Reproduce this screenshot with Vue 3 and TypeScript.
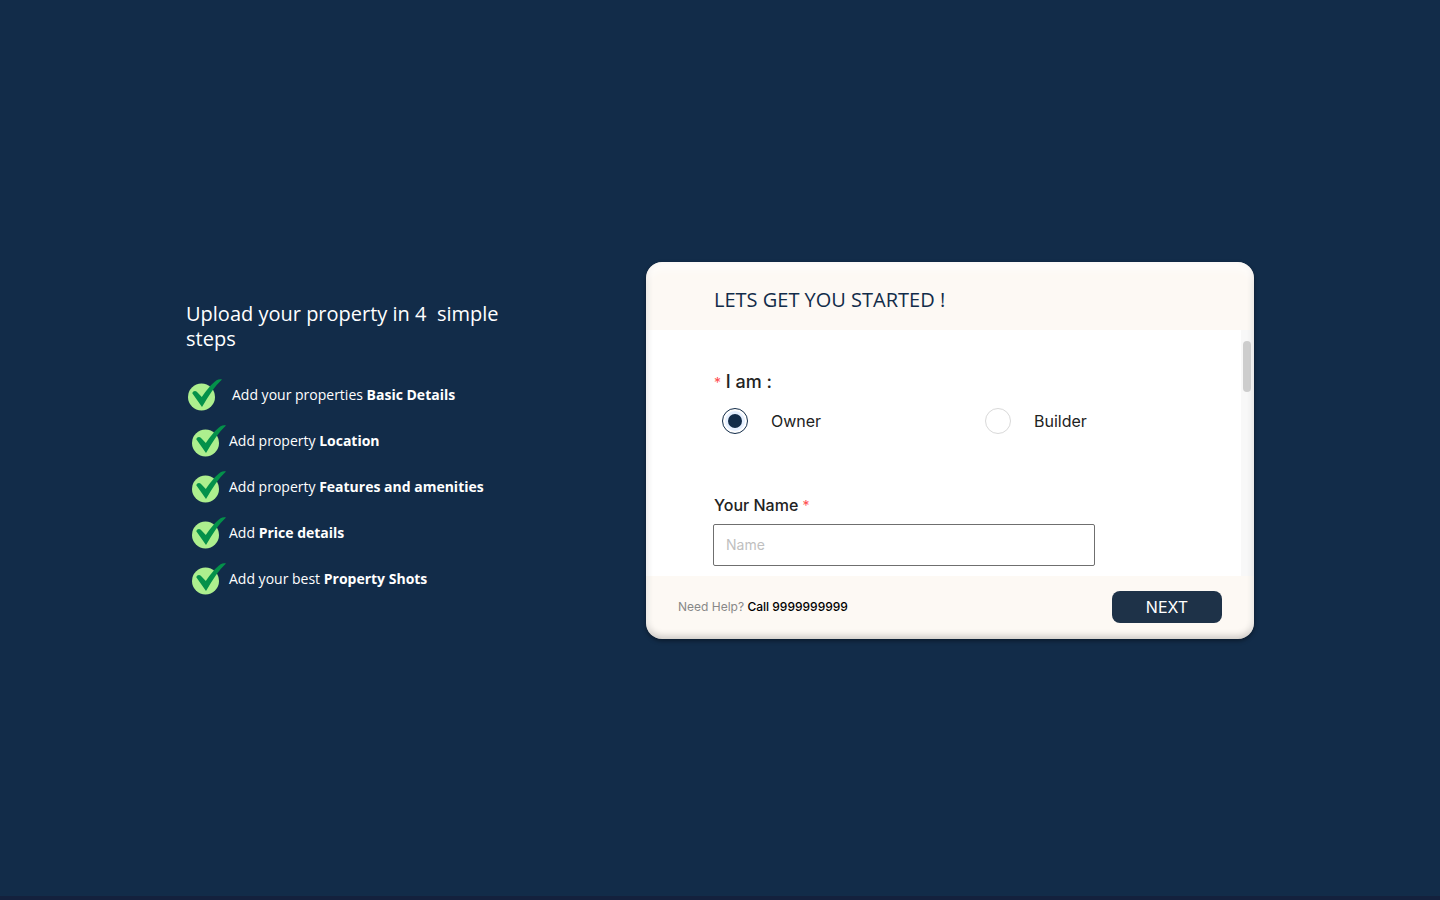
<script setup lang="ts">
import { ref } from 'vue'

interface Step {
  text: string
  strong: string
}

const steps: Step[] = [
  { text: 'Add your properties', strong: 'Basic Details' },
  { text: 'Add property', strong: 'Location' },
  { text: 'Add property', strong: 'Features and amenities' },
  { text: 'Add', strong: 'Price details' },
  { text: 'Add your best', strong: 'Property Shots' },
]

const roles: string[] = ['Owner', 'Builder']
const role = ref<string>('Owner')
const name = ref<string>('')
</script>

<template>
  <div class="page">
    <main class="layout">
      <section class="intro">
        <h1>Upload your property in 4&nbsp; simple steps</h1>
        <ul>
          <li v-for="step in steps" :key="step.strong">
            <svg class="tick" viewBox="0 0 34 32" aria-hidden="true">
              <circle cx="13.5" cy="18" r="13.5" fill="#adef8e" />
              <path
                d="M4.3 14.2C5 11.8 7.4 11.2 8.8 12.8L13.8 18C18.5 11.5 23.5 4.8 28.6 1.3C30.2 .2 32 0 34 .4C26.8 7 20.2 17.5 14 28Z"
                fill="#04914a"
              />
            </svg>
            <span>{{ step.text }} <strong>{{ step.strong }}</strong></span>
          </li>
        </ul>
      </section>

      <form class="card" @submit.prevent>
        <header>
          <h2>LETS GET YOU STARTED !</h2>
        </header>
        <div class="body">
          <div class="fields">
            <fieldset>
              <legend><span class="star">*</span> I am :</legend>
              <div class="roles">
                <label v-for="item in roles" :key="item">
                  <input v-model="role" type="radio" name="role" :value="item" />
                  {{ item }}
                </label>
              </div>
            </fieldset>
            <label class="name-label" for="name">Your Name <span class="star">*</span></label>
            <input id="name" v-model="name" class="name" type="text" placeholder="Name" />
          </div>
          <div class="track"><div class="thumb"></div></div>
        </div>
        <footer>
          <p>Need Help? <b>Call 9999999999</b></p>
          <button type="submit">NEXT</button>
        </footer>
      </form>
    </main>
  </div>
</template>

<style>
body {
  margin: 0;
  background: #122c49;
}
</style>

<style scoped>
* {
  box-sizing: border-box;
}

.page {
  min-height: 100vh;
  display: flex;
  align-items: center;
  justify-content: center;
  border-bottom: 4px solid #14213d;
  padding: 4px 24px 0;
  background: #122c49;
  font-family: Inter, "Liberation Sans", sans-serif;
}

.layout {
  width: 100%;
  max-width: 1068px;
  display: flex;
  align-items: center;
  justify-content: space-between;
  gap: 32px;
}

.intro {
  flex: 0 1 336px;
  padding-bottom: 4px;
  color: #fff;
  font-family: "Open Sans", "Noto Sans", sans-serif;
}

h1 {
  margin: 0 0 28px;
  font-size: 20px;
  line-height: 25px;
  font-weight: 400;
}

ul {
  margin: 0;
  padding: 0;
  list-style: none;
  display: grid;
  gap: 14px;
}

li {
  display: flex;
  align-items: center;
  gap: 3px;
  padding-left: 6px;
  font-size: 14px;
  line-height: 32px;
  white-space: nowrap;
}

li:first-child {
  gap: 10px;
  padding-left: 2px;
}

li strong {
  font-weight: 700;
}

.tick {
  flex: none;
  width: 34px;
  height: 32px;
}

.card {
  position: relative;
  flex: 0 1 608px;
  overflow: hidden;
  border-radius: 16px;
  background: #fdf9f4;
  box-shadow: 0 2px 4px rgba(0, 0, 0, 0.4);
}

.card::after {
  content: "";
  position: absolute;
  inset: 0;
  border-radius: inherit;
  pointer-events: none;
  box-shadow:
    inset 0 8px 8px rgba(255, 255, 255, 0.6),
    inset 0 -3px 7px rgba(0, 0, 0, 0.2);
}

header {
  padding: 26px 68px 18px;
}

h2 {
  margin: 0;
  color: #122c49;
  font-family: "Open Sans", "Noto Sans", sans-serif;
  font-size: 20px;
  line-height: 24px;
  font-weight: 500;
}

.body {
  display: flex;
  background: #fff;
}

.fields {
  flex: 1;
  padding: 40px 67px 10px;
  color: #222;
}

fieldset {
  margin: 0;
  padding: 0;
  border: 0;
}

legend {
  padding: 0 1px;
  font-size: 18px;
  line-height: 24px;
  font-weight: 500;
}

.star {
  color: #ff4d4f;
  font-size: 14px;
  font-weight: 400;
}

.roles {
  display: grid;
  grid-template-columns: 263px 1fr;
  padding: 13px 0 0 9px;
}

.roles label {
  display: flex;
  align-items: center;
  gap: 23px;
  font-size: 16px;
  line-height: 26px;
}

.roles input {
  appearance: none;
  display: grid;
  place-items: center;
  width: 26px;
  height: 26px;
  margin: 0;
  border: 1px solid #d9d9d9;
  border-radius: 50%;
  background: #fff;
}

.roles input:checked {
  border-color: #122c49;
}

.roles input:checked::before {
  content: "";
  width: 14px;
  height: 14px;
  border-radius: 50%;
  background: #122c49;
  box-shadow: 0 0 0 3px #e6f0ff;
}

.name-label {
  display: block;
  margin: 59px 0 6px 1px;
  font-size: 16px;
  line-height: 24px;
  font-weight: 500;
}

.name {
  display: block;
  width: 100%;
  max-width: 382px;
  height: 42px;
  padding: 0 12px;
  border: 1px solid #6f6f6f;
  border-radius: 2px;
  background: #fff;
  color: #222;
  font: 14px/20px Inter, "Liberation Sans", sans-serif;
}

.name::placeholder {
  color: #bfbfbf;
}

.track {
  flex: none;
  width: 13px;
  padding: 11px 3px 0 2px;
  background: #f8f8f8;
}

.thumb {
  height: 51px;
  border-radius: 4px;
  background: #cdcdcd;
}

footer {
  display: flex;
  align-items: center;
  justify-content: space-between;
  padding: 15px 32px 16px;
}

footer p {
  margin: 0;
  color: #888;
  font-size: 12px;
  line-height: 16px;
}

footer b {
  color: #000;
  font-weight: 500;
}

button {
  width: 110px;
  height: 32px;
  padding: 0;
  border: 0;
  border-radius: 8px;
  background: #1e3248;
  color: #fff;
  font: 16px/24px Inter, "Liberation Sans", sans-serif;
}
</style>
